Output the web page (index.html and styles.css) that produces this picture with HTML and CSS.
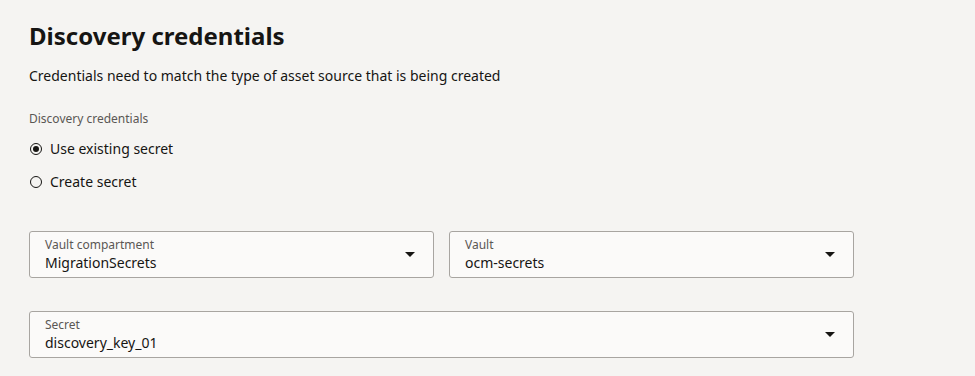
FILE: index.html
```html
<!DOCTYPE html>
<html lang="en">
  <head>
    <meta charset="UTF-8" />
    <meta name="viewport" content="width=device-width, initial-scale=1.0" />
    <title>Discovery credentials</title>
    <link rel="stylesheet" href="styles.css">
  </head>
  <body>
    <div class="page">
      <h1>Discovery credentials</h1>
      <p class="intro">Credentials need to match the type of asset source that is being created</p>

      <div class="group-label">Discovery credentials</div>
      <div class="radios">
        <label class="radio">
          <span class="dot checked"></span>
          Use existing secret
        </label>
        <label class="radio">
          <span class="dot"></span>
          Create secret
        </label>
      </div>

      <div class="row">
        <div class="select">
          <div class="select-text">
            <span class="select-label">Vault compartment</span>
            <span class="select-value">MigrationSecrets</span>
          </div>
          <span class="caret"></span>
        </div>
        <div class="select">
          <div class="select-text">
            <span class="select-label">Vault</span>
            <span class="select-value">ocm-secrets</span>
          </div>
          <span class="caret"></span>
        </div>
      </div>

      <div class="row">
        <div class="select wide">
          <div class="select-text">
            <span class="select-label">Secret</span>
            <span class="select-value">discovery_key_01</span>
          </div>
          <span class="caret"></span>
        </div>
      </div>
    </div>
  </body>
</html>
```

FILE: styles.css
```css
body {
  margin: 0;
  background-color: #f5f4f2;
  font-family: "Noto Sans", "Open Sans", sans-serif;
  color: #161513;
}
.page {
  padding: 18px 0 0 29px;
  width: 825px;
}
h1 {
  font-size: 24px;
  font-weight: 700;
  margin: 0;
  line-height: 36px;
}
.intro {
  font-size: 14px;
  margin: 12px 0 0;
  line-height: 20px;
}
.group-label {
  font-size: 12px;
  color: #5a5754;
  margin-top: 25px;
  line-height: 16px;
}
.radios {
  margin-top: 12px;
  display: flex;
  flex-direction: column;
  gap: 13px;
}
.radio {
  display: flex;
  align-items: center;
  gap: 8px;
  font-size: 14px;
  line-height: 20px;
}
.dot {
  width: 10px;
  height: 10px;
  border: 1.5px solid #161513;
  border-radius: 50%;
  margin-left: 1px;
  display: flex;
  align-items: center;
  justify-content: center;
}
.dot.checked::after {
  content: "";
  width: 6px;
  height: 6px;
  border-radius: 50%;
  background-color: #161513;
}
.row {
  display: flex;
  gap: 15px;
  margin-top: 39px;
}
.row + .row {
  margin-top: 33px;
}
.select {
  flex: 1;
  box-sizing: border-box;
  height: 47px;
  border: 1px solid #a8a5a1;
  border-radius: 3px;
  background-color: #fbfaf9;
  display: flex;
  align-items: center;
  padding: 0 18px 0 15px;
}
.select-text {
  flex: 1;
  display: flex;
  flex-direction: column;
}
.select-label {
  font-size: 12px;
  color: #5a5754;
  line-height: 16px;
}
.select-value {
  font-size: 14px;
  line-height: 19px;
}
.caret {
  width: 0;
  height: 0;
  border-left: 5px solid transparent;
  border-right: 5px solid transparent;
  border-top: 5px solid #161513;
}
```
